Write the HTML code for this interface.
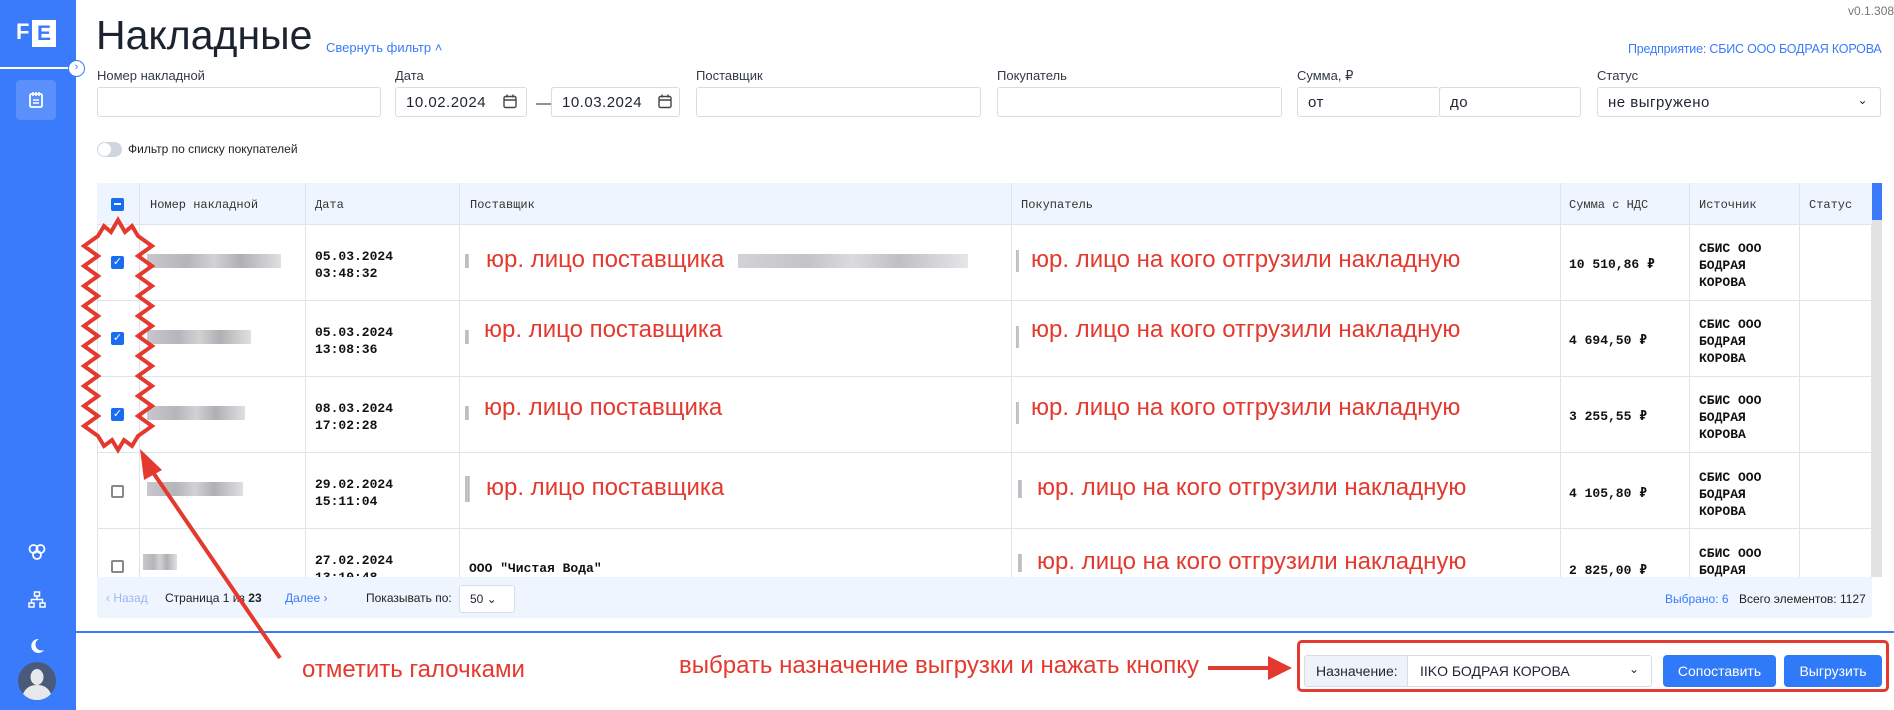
<!DOCTYPE html>
<html><head><meta charset="utf-8"><style>
*{box-sizing:border-box;margin:0;padding:0}
body{width:1894px;height:710px;overflow:hidden;background:#fff;font-family:"Liberation Sans","DejaVu Sans",sans-serif;color:#1e2532;position:relative}
.a{position:absolute;white-space:nowrap}
.sb{left:0;top:0;width:76px;height:710px;background:#3a7bfb}
.lbl{font-size:13px;color:#333a45;top:68px}
.inp{top:87px;height:30px;border:1px solid #d7dde6;border-radius:3px;background:#fff;font-size:15px;padding:6px 10px;letter-spacing:0.5px}
.th{font-family:"Liberation Mono",monospace;font-size:12px;color:#333;top:198px}
.col{top:183px;width:1px;height:394px;background:#dce4ee}
.row{left:97px;width:1775px;height:1px;background:#dce4ee}
.mono{font-family:"Liberation Mono",monospace;font-weight:bold;font-size:13px;color:#111;line-height:17px}
.red{color:#e3392e;font-size:24px}
.cb{width:13px;height:13px;border-radius:2px}
.on{background:#1a6cf0}
.off{border:2px solid #888;background:#fff}
.blur{height:14px;background:linear-gradient(90deg,#c8c8cc,#b5b5ba 30%,#d2d2d5 50%,#b0b0b4 70%,#e0e0e2)}
</style></head><body>
<div class="a sb"></div>
<div class="a" style="left:16px;top:19px;color:#fff;font-weight:bold;font-size:22px">F</div>
<div class="a" style="left:32px;top:20px;width:24px;height:27px;background:#fff;color:#3a7bfb;font-weight:bold;font-size:21px;text-align:center;line-height:27px">E</div>
<div class="a" style="left:0;top:67px;width:70px;height:2px;background:#fff"></div>
<div class="a" style="left:68px;top:60px;width:17px;height:17px;border-radius:50%;background:#fff;border:1.5px solid #3a7bfb;color:#3a7bfb;font-size:11px;text-align:center;line-height:13px">›</div>
<div class="a" style="left:16px;top:80px;width:40px;height:40px;border-radius:4px;background:#5990fc"></div>
<svg class="a" style="left:28px;top:91px" width="16" height="18" viewBox="0 0 16 18"><rect x="2" y="3" width="12" height="13" rx="1.5" fill="none" stroke="#fff" stroke-width="1.8"/><path d="M5 1v4M8 1v4M11 1v4M5 9h6M5 12h6" stroke="#fff" stroke-width="1.6"/></svg>
<svg class="a" style="left:27px;top:543px" width="20" height="18" viewBox="0 0 20 18"><circle cx="6.5" cy="6" r="4" fill="none" stroke="#fff" stroke-width="1.8"/><circle cx="13.5" cy="6" r="4" fill="none" stroke="#fff" stroke-width="1.8"/><circle cx="10" cy="12" r="4" fill="none" stroke="#fff" stroke-width="1.8"/></svg>
<svg class="a" style="left:28px;top:591px" width="18" height="18" viewBox="0 0 18 18"><rect x="6.5" y="1" width="5" height="4" fill="none" stroke="#fff" stroke-width="1.5"/><rect x="1" y="12" width="5" height="4" fill="none" stroke="#fff" stroke-width="1.5"/><rect x="12" y="12" width="5" height="4" fill="none" stroke="#fff" stroke-width="1.5"/><path d="M9 5v3.5M3.5 12V8.5h11V12" fill="none" stroke="#fff" stroke-width="1.5"/></svg>
<div class="a" style="left:0;top:631px;width:1894px;height:1.5px;background:#3a7bfb"></div>
<svg class="a" style="left:29px;top:638px" width="16" height="16" viewBox="0 0 16 16"><path d="M10 1a7 7 0 1 0 5 11A6 6 0 0 1 10 1z" fill="#fff"/></svg>
<svg class="a" style="left:18px;top:662px" width="38" height="38" viewBox="0 0 38 38"><circle cx="19" cy="19" r="19" fill="#4a5a7a"/><ellipse cx="19" cy="15" rx="6.5" ry="8" fill="#e6e8ec"/><path d="M5 32c3-7 8-9 14-9s11 2 14 9a19 19 0 0 1-28 0z" fill="#e6e8ec"/></svg>

<div class="a" style="left:96px;top:12px;font-size:41px;color:#1b2230">Накладные</div>
<div class="a" style="left:326px;top:40px;font-size:13px;color:#3a7bfb">Свернуть фильтр ˄</div>
<div class="a" style="left:1848px;top:4px;font-size:12px;color:#777">v0.1.308</div>
<div class="a" style="left:1628px;top:42px;font-size:12.5px;color:#3a7bfb;letter-spacing:-0.2px">Предприятие: СБИС ООО БОДРАЯ КОРОВА</div>

<div class="a lbl" style="left:97px">Номер накладной</div>
<div class="a lbl" style="left:395px">Дата</div>
<div class="a lbl" style="left:696px">Поставщик</div>
<div class="a lbl" style="left:997px">Покупатель</div>
<div class="a lbl" style="left:1297px">Сумма, ₽</div>
<div class="a lbl" style="left:1597px">Статус</div>
<div class="a inp" style="left:97px;width:284px"></div>
<div class="a inp" style="left:395px;width:132px">10.02.2024</div>
<div class="a" style="left:536px;top:95px;font-size:15px">—</div>
<div class="a inp" style="left:551px;width:129px">10.03.2024</div>
<svg class="a" style="left:503px;top:94px" width="14" height="15" viewBox="0 0 14 15"><rect x="1" y="2.5" width="12" height="11" rx="1.5" fill="none" stroke="#444" stroke-width="1.4"/><path d="M1 6h12M4 0.5v3M10 0.5v3" stroke="#444" stroke-width="1.4"/></svg>
<svg class="a" style="left:658px;top:94px" width="14" height="15" viewBox="0 0 14 15"><rect x="1" y="2.5" width="12" height="11" rx="1.5" fill="none" stroke="#444" stroke-width="1.4"/><path d="M1 6h12M4 0.5v3M10 0.5v3" stroke="#444" stroke-width="1.4"/></svg>
<div class="a inp" style="left:696px;width:285px"></div>
<div class="a inp" style="left:997px;width:285px"></div>
<div class="a inp" style="left:1297px;width:143px">от</div>
<div class="a inp" style="left:1439px;width:142px">до</div>
<div class="a inp" style="left:1597px;width:284px">не выгружено<span style="position:absolute;right:12px;top:5px;font-size:12px">⌄</span></div>
<div class="a" style="left:97px;top:142px;width:25px;height:15px;border-radius:8px;background:#cfd6df"></div>
<div class="a" style="left:98px;top:143px;width:13px;height:13px;border-radius:50%;background:#fff"></div>
<div class="a" style="left:128px;top:142px;font-size:12px;color:#222">Фильтр по списку покупателей</div>

<div class="a" style="left:97px;top:183px;width:1775px;height:435px;border:1px solid #dce4ee;border-radius:4px"></div>
<div class="a" style="left:97px;top:183px;width:1775px;height:41px;background:#eef5fe"></div>
<div class="a" style="left:97px;top:577px;width:1775px;height:41px;background:#eef5fe;border-radius:0 0 4px 4px"></div>
<div class="a col" style="left:139px"></div><div class="a col" style="left:305px"></div><div class="a col" style="left:459px"></div><div class="a col" style="left:1011px"></div><div class="a col" style="left:1560px"></div><div class="a col" style="left:1689px"></div><div class="a col" style="left:1799px"></div>
<div class="a row" style="top:224px"></div><div class="a row" style="top:300px"></div><div class="a row" style="top:376px"></div><div class="a row" style="top:452px"></div><div class="a row" style="top:528px"></div>
<div class="a" style="left:1872px;top:183px;width:10px;height:394px;background:#e2e2e2"></div>
<div class="a" style="left:1872px;top:183px;width:10px;height:37px;background:#3a7bfb"></div>
<div class="a cb on" style="left:111px;top:198px"><div style="margin:5px 3px;width:7px;height:2px;background:#fff"></div></div>
<div class="a th" style="left:150px">Номер накладной</div>
<div class="a th" style="left:315px">Дата</div>
<div class="a th" style="left:470px">Поставщик</div>
<div class="a th" style="left:1021px">Покупатель</div>
<div class="a th" style="left:1569px">Сумма с НДС</div>
<div class="a th" style="left:1699px">Источник</div>
<div class="a th" style="left:1809px">Статус</div>

<div class="a cb on" style="left:111px;top:256px;color:#fff;font-size:11px;text-align:center;line-height:13px">✓</div>
<div class="a blur" style="left:147px;top:254px;width:134px"></div>
<div class="a mono" style="left:315px;top:248px">05.03.2024<br>03:48:32</div>
<div class="a blur" style="left:465px;top:254px;width:4px"></div>
<div class="a red" style="left:486px;top:246px">юр. лицо поставщика</div>
<div class="a blur" style="left:738px;top:254px;width:230px;opacity:.8"></div>
<div class="a blur" style="left:1016px;top:250px;width:3px;height:22px"></div>
<div class="a red" style="left:1031px;top:246px">юр. лицо на кого отгрузили накладную</div>
<div class="a mono" style="left:1569px;top:256px">10 510,86 ₽</div>
<div class="a mono" style="left:1699px;top:240px">СБИС ООО<br>БОДРАЯ<br>КОРОВА</div>

<div class="a cb on" style="left:111px;top:332px;color:#fff;font-size:11px;text-align:center;line-height:13px">✓</div>
<div class="a blur" style="left:147px;top:330px;width:104px"></div>
<div class="a mono" style="left:315px;top:324px">05.03.2024<br>13:08:36</div>
<div class="a blur" style="left:465px;top:330px;width:4px"></div>
<div class="a red" style="left:484px;top:316px">юр. лицо поставщика</div>
<div class="a blur" style="left:1016px;top:326px;width:3px;height:22px"></div>
<div class="a red" style="left:1031px;top:316px">юр. лицо на кого отгрузили накладную</div>
<div class="a mono" style="left:1569px;top:332px">4 694,50 ₽</div>
<div class="a mono" style="left:1699px;top:316px">СБИС ООО<br>БОДРАЯ<br>КОРОВА</div>

<div class="a cb on" style="left:111px;top:408px;color:#fff;font-size:11px;text-align:center;line-height:13px">✓</div>
<div class="a blur" style="left:147px;top:406px;width:98px"></div>
<div class="a mono" style="left:315px;top:400px">08.03.2024<br>17:02:28</div>
<div class="a blur" style="left:465px;top:406px;width:4px"></div>
<div class="a red" style="left:484px;top:394px">юр. лицо поставщика</div>
<div class="a blur" style="left:1016px;top:402px;width:3px;height:22px"></div>
<div class="a red" style="left:1031px;top:394px">юр. лицо на кого отгрузили накладную</div>
<div class="a mono" style="left:1569px;top:408px">3 255,55 ₽</div>
<div class="a mono" style="left:1699px;top:392px">СБИС ООО<br>БОДРАЯ<br>КОРОВА</div>

<div class="a cb off" style="left:111px;top:485px"></div>
<div class="a blur" style="left:147px;top:482px;width:96px"></div>
<div class="a mono" style="left:315px;top:476px">29.02.2024<br>15:11:04</div>
<div class="a blur" style="left:465px;top:476px;width:5px;height:26px"></div>
<div class="a red" style="left:486px;top:474px">юр. лицо поставщика</div>
<div class="a blur" style="left:1018px;top:480px;width:4px;height:18px"></div>
<div class="a red" style="left:1037px;top:474px">юр. лицо на кого отгрузили накладную</div>
<div class="a mono" style="left:1569px;top:485px">4 105,80 ₽</div>
<div class="a mono" style="left:1699px;top:469px">СБИС ООО<br>БОДРАЯ<br>КОРОВА</div>

<div class="a cb off" style="left:111px;top:560px"></div>
<div class="a blur" style="left:143px;top:554px;width:34px;height:16px"></div>
<div class="a mono" style="left:315px;top:552px;height:25px;overflow:hidden">27.02.2024<br>13:10:48</div>
<div class="a mono" style="left:469px;top:560px">ООО "Чистая Вода"</div>
<div class="a blur" style="left:1018px;top:554px;width:4px;height:18px"></div>
<div class="a red" style="left:1037px;top:548px;height:29px;overflow:hidden">юр. лицо на кого отгрузили накладную</div>
<div class="a mono" style="left:1569px;top:562px">2 825,00 ₽</div>
<div class="a mono" style="left:1699px;top:545px;height:32px;overflow:hidden">СБИС ООО<br>БОДРАЯ<br>КОРОВА</div>

<div class="a" style="left:106px;top:591px;font-size:12px;color:#9bb8f0">‹ Назад</div>
<div class="a" style="left:165px;top:591px;font-size:12px;color:#222">Страница 1 из <b>23</b></div>
<div class="a" style="left:285px;top:591px;font-size:12px;color:#3a7bfb">Далее ›</div>
<div class="a" style="left:366px;top:591px;font-size:12px;color:#222">Показывать по:</div>
<div class="a" style="left:459px;top:585px;width:56px;height:28px;border:1px solid #d7dde6;border-radius:3px;background:#fff;font-size:12px;padding:6px 10px">50 ⌄</div>
<div class="a" style="left:1665px;top:592px;font-size:12px;color:#3a7bfb">Выбрано: 6</div>
<div class="a" style="left:1739px;top:592px;font-size:12px;color:#222">Всего элементов: 1127</div>

<div class="a" style="left:1297px;top:640px;width:592px;height:52px;border:3px solid #e3392e;border-radius:5px"></div>
<div class="a" style="left:1304px;top:655px;width:104px;height:32px;border:1px solid #d7dde6;border-radius:3px 0 0 3px;background:#eef3fb;font-size:14px;padding:7px 11px">Назначение:</div>
<div class="a" style="left:1407px;top:655px;width:245px;height:32px;border:1px solid #d7dde6;border-radius:0 3px 3px 0;background:#fff;font-size:14px;padding:7px 12px">IIKO БОДРАЯ КОРОВА<span style="position:absolute;right:12px;top:6px;font-size:12px">⌄</span></div>
<div class="a" style="left:1663px;top:655px;width:113px;height:32px;border-radius:4px;background:#2f7af8;color:#fff;font-size:14px;text-align:center;line-height:32px">Сопоставить</div>
<div class="a" style="left:1784px;top:655px;width:98px;height:32px;border-radius:4px;background:#2f7af8;color:#fff;font-size:14px;text-align:center;line-height:32px">Выгрузить</div>
<div class="a red" style="left:679px;top:652px">выбрать назначение выгрузки и нажать кнопку</div>
<div class="a red" style="left:302px;top:656px">отметить галочками</div>

<svg class="a" style="left:0;top:0" width="1894" height="710">
<polygon fill="none" stroke="#e3392e" stroke-width="4" stroke-linejoin="miter" points="98,236 84,246 98,256 84,266 98,276 84,286 98,296 84,306 98,316 84,326 98,336 84,346 98,356 84,366 98,376 84,386 98,396 84,406 98,416 84,426 98,436 104,446 112,440 118,450 124,440 132,446 138,436 152,426 138,416 152,406 138,396 152,386 138,376 152,366 138,356 152,346 138,336 152,326 138,316 152,306 138,296 152,286 138,276 152,266 138,256 152,246 138,236 132,226 125,232 118,220 111,232 104,226"/>
<line x1="280" y1="658" x2="150" y2="468" stroke="#e3392e" stroke-width="4"/>
<polygon fill="#e3392e" points="140,449 162,470 144,480"/>
<line x1="1208" y1="668" x2="1272" y2="668" stroke="#e3392e" stroke-width="4"/>
<polygon fill="#e3392e" points="1292,668 1268,656 1268,680"/>
</svg>
</body></html>
